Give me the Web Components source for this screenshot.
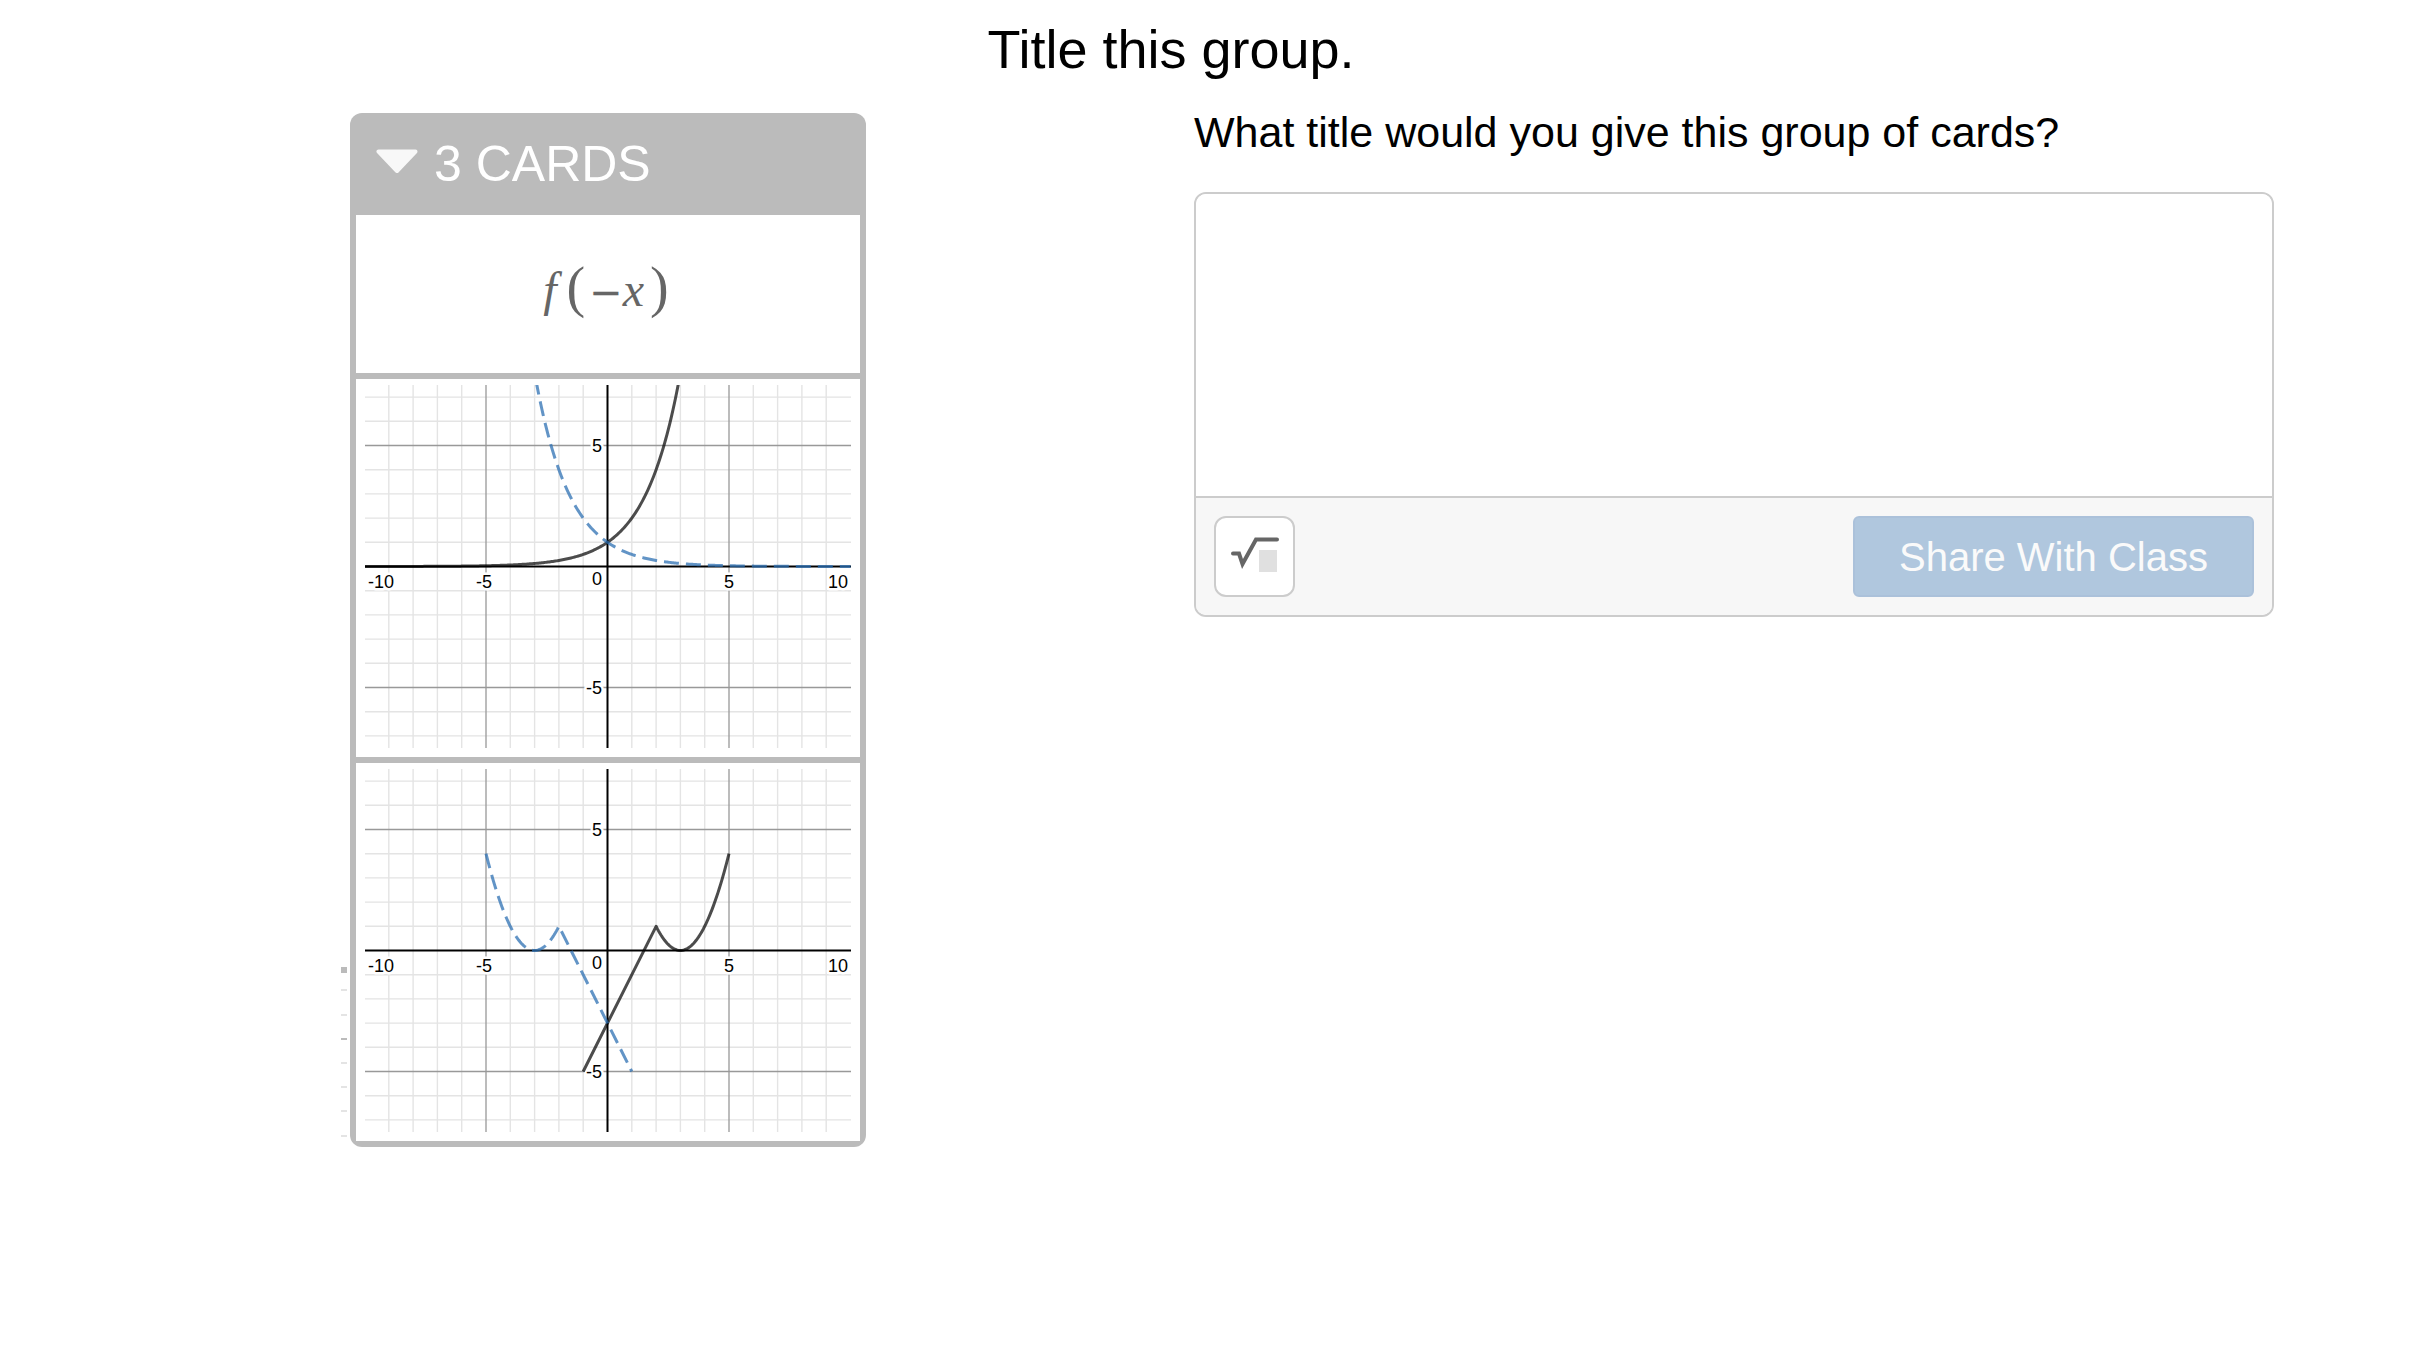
<!DOCTYPE html>
<html lang="en">
<head>
<meta charset="utf-8">
<title>Title this group.</title>
<style>
html,body{margin:0;background:#fff;color:#000}
body{font-family:"Liberation Sans",Arial,sans-serif}
</style>
</head>
<body>
<activity-page>
  <span slot="title">Title this group.</span>
  <card-stack slot="cards" label="3 CARDS">
    <math-card></math-card>
    <graph-card curve="exponential" label="Exponential curve and its reflection"></graph-card>
    <graph-card curve="piecewise" label="Piecewise curve and its reflection"></graph-card>
  </card-stack>
  <response-box slot="response">What title would you give this group of cards?</response-box>
</activity-page>
<script>
class BaseElement extends HTMLElement {
  connectedCallback() {
    if (this.shadowRoot) return;
    this.attachShadow({mode: "open"}).innerHTML = this.render();
  }
}

class ActivityPage extends BaseElement {
  render() {
    return `<style>
      :host{display:block}
      h1{margin:0;padding:18px 74px 0 0;font-size:54px;line-height:62px;font-weight:400;text-align:center}
      main{display:grid;grid-template-columns:350fr 516px 328fr minmax(0,1080fr) 142fr;align-items:start;padding-top:25px}
      .cards{grid-column:2;padding-top:8px}
      .response{grid-column:4}
    </style>
    <h1><slot name="title"></slot></h1>
    <main><div class="cards"><slot name="cards"></slot></div><div class="response"><slot name="response"></slot></div></main>`;
  }
}

class CardStack extends BaseElement {
  render() {
    return `<style>
      :host{display:block;position:relative}
      .stack{display:flex;flex-direction:column;gap:6px;padding:0 6px 6px;background:#bbb;border-radius:12px}
      button{display:flex;align-items:flex-start;gap:16px;height:96px;padding:23px 0 0 20px;border:0;background:none;color:#fff;font:50px/56px "Liberation Sans",Arial,sans-serif;text-align:left}
      button svg{display:block;margin-top:12px}
      .peek{position:absolute;left:-10px}
      .side{bottom:0}
      .below{top:100%}
    </style>
    <div class="stack">
      <button type="button" aria-expanded="true">
        <svg width="42" height="25" viewBox="0 0 42 25" aria-hidden="true"><path d="M2.500 3.500H39.500L21 23Z" fill="#f8f8f8" stroke="#f8f8f8" stroke-width="4" stroke-linejoin="round"/></svg>
        <span>${this.getAttribute("label")}</span>
      </button>
      <slot></slot>
    </div>
    <svg class="peek side" width="8" height="182" aria-hidden="true">
      <path d="M1 5h6" stroke="#bbb" stroke-width="6"/>
      <path d="M1 25h6M1 50h6M1 98h6M1 122h6M1 146h6M1 171h6" stroke="#e4e4e4" stroke-width="2"/>
      <path d="M1 74h6" stroke="#bbb" stroke-width="2"/>
    </svg>
    <svg class="peek below" width="120" height="8" aria-hidden="true">
      <path d="M21 4h3v1h-3zM46 4h3v1h-3zM70 4h3v1h-3z" fill="#ddd"/>
      <path d="M102 3h7v2h-7z" fill="#b4b4b4"/>
    </svg>`;
  }
}

class MathCard extends BaseElement {
  render() {
    return `<style>
      :host{display:flex;align-items:center;justify-content:center;box-sizing:border-box;height:158px;padding:0 8px 10px 0;background:#fff;color:#666;font:48px/64px "Liberation Serif","Times New Roman",serif}
      .math{display:flex;align-items:baseline}
      .f{padding:0 10px 0 4px}
      .x{padding:0 6px 0 0}
      .paren{font-size:56px}
      .minus{padding-left:4px;font:40px/64px "DejaVu Sans",sans-serif}
    </style>
    <div class="math"><i class="f">f</i><span class="paren">(</span><span class="minus">−</span><i class="x">x</i><span class="paren">)</span></div>`;
  }
}

const U = 24.3, V = 24.2, OX = 242.5, OY = 181.5;
const toPath = points => "M" + points.map(([x, y]) => (OX + x * U).toFixed(2) + " " + (OY - y * V).toFixed(2)).join("L");
const sample = (fn, from, to, step = 0.05) => {
  const points = [];
  for (let i = 0; i <= Math.round((to - from) / step); i++) {
    const x = from + i * step;
    points.push([x, fn(x)]);
  }
  return points;
};
const curves = {
  exponential: {points: () => sample(x => 2 ** x, -10, 3), dashOffset: -7},
  piecewise: {points: () => [[-1, -5], ...sample(x => (x - 3) ** 2, 2, 5)], dashOffset: 0}
};

class GraphCard extends BaseElement {
  render() {
    const curve = curves[this.getAttribute("curve")];
    const points = curve.points();
    const reflected = points.map(([x, y]) => [-x, y]).reverse();
    let minor = "", major = "";
    for (let i = -9; i <= 9; i++) {
      if (!i) continue;
      const line = `M${OX + i * U} 0V363`;
      i % 5 ? minor += line : major += line;
    }
    for (let j = -7; j <= 7; j++) {
      if (!j) continue;
      const line = `M0 ${OY - j * V}H486`;
      j % 5 ? minor += line : major += line;
    }
    return `<style>
      :host{display:block;background:#fff;padding:6px 9px 9px}
      svg{display:block;width:100%;height:auto;overflow:hidden}
      text{font:18px "Liberation Sans",Arial,sans-serif;fill:#000;stroke:#fff;stroke-width:5px;stroke-linejoin:round;paint-order:stroke}
    </style>
    <svg viewBox="0 0 486 363" role="img" aria-label="${this.getAttribute("label")}">
      <g fill="none">
        <path d="${minor}" stroke="#e4e4e4" stroke-width="1.400"/>
        <path d="${major}" stroke="#999" stroke-width="1.300"/>
        <path d="M0 ${OY}H486M${OX} 0V363" stroke="#000" stroke-width="2"/>
      </g>
      <g>
        <text x="3" y="203">-10</text><text x="111" y="203">-5</text><text x="227" y="200">0</text>
        <text x="359" y="203">5</text><text x="463" y="203">10</text>
        <text x="227" y="67">5</text><text x="221" y="309">-5</text>
      </g>
      <g fill="none" stroke-width="3" stroke-linejoin="round">
        <path d="${toPath(points)}" stroke="#000" stroke-opacity=".7"/>
        <path d="${toPath(reflected)}" stroke="#2d70b3" stroke-opacity=".75" stroke-dasharray="15 7" stroke-dashoffset="${curve.dashOffset}"/>
      </g>
    </svg>`;
  }
}

class ResponseBox extends BaseElement {
  render() {
    return `<style>
      :host{display:block}
      label{display:block;margin-bottom:32px;font-size:43px;line-height:55px}
      .box{border:2px solid #ccc;border-radius:12px;overflow:hidden;background:#fff}
      textarea{display:block;box-sizing:border-box;width:100%;height:302px;padding:16px;border:0;outline:0;resize:none;background:#fff;font:40px/48px "Liberation Sans",Arial,sans-serif}
      .bar{display:flex;justify-content:space-between;padding:18px;border-top:2px solid #ccc;background:#f7f7f7}
      button{box-sizing:border-box;height:81px;margin:0;padding:0}
      .math{display:grid;place-items:center;width:81px;border:2px solid #ccc;border-radius:12px;background:#fff}
      .share{padding:0 44px;border:2px solid #abc1da;border-radius:6px;background:#b0c7de;color:#fafafa;font:40px/46px "Liberation Sans",Arial,sans-serif}
    </style>
    <label for="answer"><slot></slot></label>
    <div class="box">
      <textarea id="answer"></textarea>
      <div class="bar">
        <button class="math" type="button" aria-label="Math input">
          <svg width="77" height="77" viewBox="0 0 77 77" aria-hidden="true">
            <path d="M43 32h18v22H43z" fill="#e0e0e0"/>
            <path d="M17 35.500h6L26.500 46 40 21.500H61" fill="none" stroke="#666" stroke-width="4" stroke-linecap="round"/>
          </svg>
        </button>
        <button class="share" type="button">Share With Class</button>
      </div>
    </div>`;
  }
  connectedCallback() {
    super.connectedCallback();
    this.shadowRoot.querySelector("textarea").setAttribute("aria-label", this.textContent);
  }
}

customElements.define("activity-page", ActivityPage);
customElements.define("card-stack", CardStack);
customElements.define("math-card", MathCard);
customElements.define("graph-card", GraphCard);
customElements.define("response-box", ResponseBox);
</script>
</body>
</html>
